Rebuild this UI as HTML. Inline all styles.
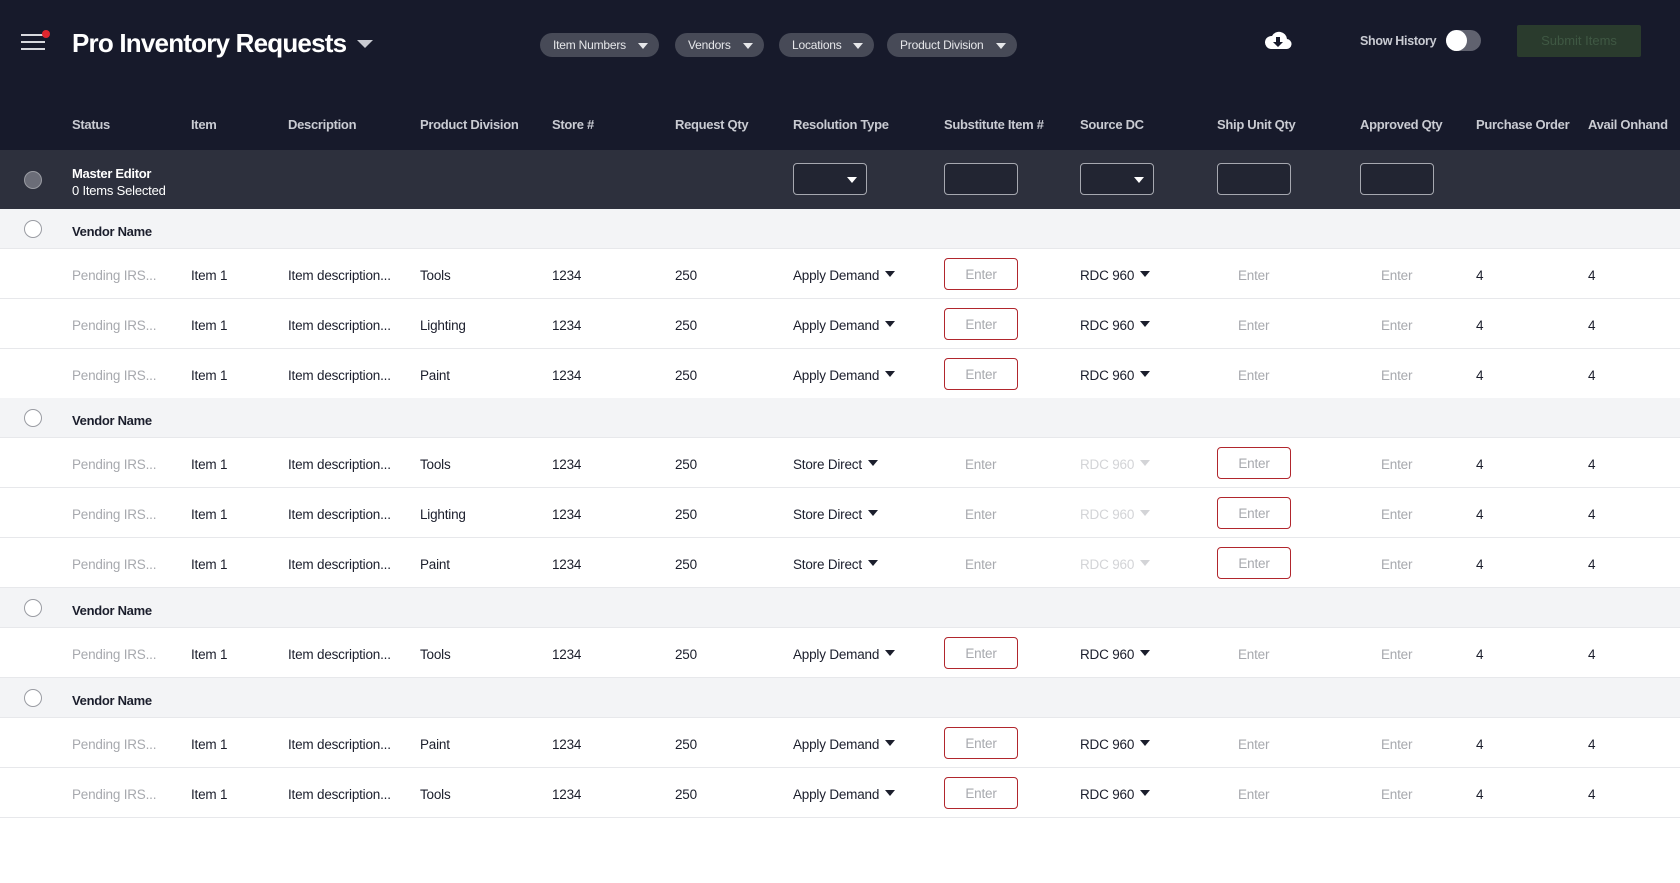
<!DOCTYPE html>
<html><head><meta charset="utf-8"><style>
*{box-sizing:border-box;margin:0;padding:0}
body{width:1680px;height:883px;background:#fff;font-family:"Liberation Sans",Arial,sans-serif;position:relative;overflow:hidden;color:#1b1e2c}
.hdr{position:absolute;left:0;top:0;width:1680px;height:150px;background:#171a2b}
.a{position:absolute;white-space:nowrap}
.pill{position:absolute;top:33px;height:24px;border-radius:12px;background:#474a57;color:#e6e7ea;font-size:12px;line-height:24px;padding-left:13px;letter-spacing:-0.2px}
.pill:after{content:"";position:absolute;right:11px;top:10px;border-left:5px solid transparent;border-right:5px solid transparent;border-top:6px solid #e6e7ea}
.ch{position:absolute;top:117px;color:#c9cbd2;font-size:13px;font-weight:bold;letter-spacing:-0.3px}
.me{position:absolute;left:0;top:150px;width:1680px;height:59px;background:#2d303d}
.box{position:absolute;top:13px;width:74px;height:32px;border:1px solid #a6a8b0;border-radius:4px;background:#222532}
.row{position:absolute;left:0;width:1680px;height:50px;border-bottom:1px solid #e7e8eb;font-size:13.5px;letter-spacing:-0.2px;background:#fff}
.row span{position:absolute;top:19px;white-space:nowrap}
.v{position:absolute;left:0;width:1680px;height:40px;background:#f3f4f6;border-bottom:1px solid #e7e8eb}
.v b{position:absolute;left:72px;top:15px;font-size:13px;color:#1b1e2c;letter-spacing:-0.3px}
.v i{position:absolute;left:24px;top:11px;width:18px;height:18px;border:1px solid #9a9ca3;border-radius:50%;background:#fff}
.g{color:#a7a9ae}
.lg{color:#d3d4d7}
.red{position:absolute;top:9px;left:944px;width:74px;height:32px;border:1px solid #b1262d;border-radius:4px;color:#a7a9ae;text-align:center;line-height:32px;font-size:13.5px}
.dd:after{content:"";display:inline-block;margin-left:6px;vertical-align:3px;border-left:5px solid transparent;border-right:5px solid transparent;border-top:6px solid #1b1e2c}
.ddl:after{content:"";display:inline-block;margin-left:6px;vertical-align:3px;border-left:5px solid transparent;border-right:5px solid transparent;border-top:6px solid #d3d4d7}
</style></head><body>
<div class="hdr">
 <div class="a" style="left:21px;top:34px;width:24px;height:2px;background:#d8d9de"></div>
 <div class="a" style="left:21px;top:41px;width:24px;height:2px;background:#d8d9de"></div>
 <div class="a" style="left:21px;top:48px;width:24px;height:2px;background:#d8d9de"></div>
 <div class="a" style="left:42px;top:30px;width:8px;height:8px;border-radius:50%;background:#e0262e"></div>
 <div class="a" style="left:72px;top:28px;font-size:26px;color:#fff;font-weight:bold;letter-spacing:-0.8px">Pro Inventory Requests</div>
 <div class="a" style="left:357px;top:40px;border-left:8px solid transparent;border-right:8px solid transparent;border-top:8px solid #c9cbd2"></div>
 <div class="pill" style="left:540px;width:119px">Item Numbers</div>
 <div class="pill" style="left:675px;width:89px">Vendors</div>
 <div class="pill" style="left:779px;width:95px">Locations</div>
 <div class="pill" style="left:887px;width:130px">Product Division</div>
 <svg class="a" style="left:1264px;top:29px" width="28" height="22" viewBox="0 0 28 22"><path d="M7 20h15a5 5 0 0 0 1-10A8 8 0 0 0 8 7a6.5 6.5 0 0 0-1 13z" fill="#fff"/><path d="M12 8h4v5h3l-5 5-5-5h3z" fill="#171a2b"/></svg>
 <div class="a" style="left:1360px;top:34px;font-size:12.5px;font-weight:bold;color:#c9cbd2;letter-spacing:-0.3px">Show History</div>
 <div class="a" style="left:1446px;top:30px;width:35px;height:21px;border-radius:11px;background:#60626f"></div>
 <div class="a" style="left:1446px;top:30px;width:21px;height:21px;border-radius:50%;background:#fff"></div>
 <div class="a" style="left:1517px;top:25px;width:124px;height:32px;background:#2a3b2d;border-radius:2px;color:#3f5843;font-size:13px;text-align:center;line-height:32px">Submit Items</div>
 <div class="ch" style="left:72px">Status</div>
 <div class="ch" style="left:191px">Item</div>
 <div class="ch" style="left:288px">Description</div>
 <div class="ch" style="left:420px">Product Division</div>
 <div class="ch" style="left:552px">Store #</div>
 <div class="ch" style="left:675px">Request Qty</div>
 <div class="ch" style="left:793px">Resolution Type</div>
 <div class="ch" style="left:944px">Substitute Item #</div>
 <div class="ch" style="left:1080px">Source DC</div>
 <div class="ch" style="left:1217px">Ship Unit Qty</div>
 <div class="ch" style="left:1360px">Approved Qty</div>
 <div class="ch" style="left:1476px">Purchase Order</div>
 <div class="ch" style="left:1588px">Avail Onhand</div>
</div>
<div class="me">
 <div class="a" style="left:24px;top:21px;width:18px;height:18px;border-radius:50%;background:#6b6d78;border:1px solid #9a9ca3"></div>
 <div class="a" style="left:72px;top:16px;font-size:13px;font-weight:bold;color:#fff;letter-spacing:-0.3px">Master Editor</div>
 <div class="a" style="left:72px;top:33px;font-size:13px;color:#fff;letter-spacing:-0.2px">0 Items Selected</div>
 <div class="box" style="left:793px"><div class="a" style="right:9px;top:13px;border-left:5px solid transparent;border-right:5px solid transparent;border-top:6px solid #fff"></div></div>
 <div class="box" style="left:944px"></div>
 <div class="box" style="left:1080px"><div class="a" style="right:9px;top:13px;border-left:5px solid transparent;border-right:5px solid transparent;border-top:6px solid #fff"></div></div>
 <div class="box" style="left:1217px"></div>
 <div class="box" style="left:1360px"></div>
</div>

<div class="v" style="top:209px"><i></i><b>Vendor Name</b></div>
<div class="row" style="top:249px"><span class="g" style="left:72px">Pending IRS...</span><span style="left:191px">Item 1</span><span style="left:288px">Item description...</span><span style="left:420px">Tools</span><span style="left:552px">1234</span><span style="left:675px">250</span><span class="dd" style="left:793px">Apply Demand</span><div class="red">Enter</div><span class="dd" style="left:1080px">RDC 960</span><span class="g" style="left:1238px">Enter</span><span class="g" style="left:1381px">Enter</span><span style="left:1476px">4</span><span style="left:1588px">4</span></div>
<div class="row" style="top:299px"><span class="g" style="left:72px">Pending IRS...</span><span style="left:191px">Item 1</span><span style="left:288px">Item description...</span><span style="left:420px">Lighting</span><span style="left:552px">1234</span><span style="left:675px">250</span><span class="dd" style="left:793px">Apply Demand</span><div class="red">Enter</div><span class="dd" style="left:1080px">RDC 960</span><span class="g" style="left:1238px">Enter</span><span class="g" style="left:1381px">Enter</span><span style="left:1476px">4</span><span style="left:1588px">4</span></div>
<div class="row" style="top:349px"><span class="g" style="left:72px">Pending IRS...</span><span style="left:191px">Item 1</span><span style="left:288px">Item description...</span><span style="left:420px">Paint</span><span style="left:552px">1234</span><span style="left:675px">250</span><span class="dd" style="left:793px">Apply Demand</span><div class="red">Enter</div><span class="dd" style="left:1080px">RDC 960</span><span class="g" style="left:1238px">Enter</span><span class="g" style="left:1381px">Enter</span><span style="left:1476px">4</span><span style="left:1588px">4</span></div>

<div class="v" style="top:398px"><i></i><b>Vendor Name</b></div>
<div class="row" style="top:438px"><span class="g" style="left:72px">Pending IRS...</span><span style="left:191px">Item 1</span><span style="left:288px">Item description...</span><span style="left:420px">Tools</span><span style="left:552px">1234</span><span style="left:675px">250</span><span class="dd" style="left:793px">Store Direct</span><span class="g" style="left:965px">Enter</span><span class="ddl lg" style="left:1080px">RDC 960</span><div class="red" style="left:1217px">Enter</div><span class="g" style="left:1381px">Enter</span><span style="left:1476px">4</span><span style="left:1588px">4</span></div>
<div class="row" style="top:488px"><span class="g" style="left:72px">Pending IRS...</span><span style="left:191px">Item 1</span><span style="left:288px">Item description...</span><span style="left:420px">Lighting</span><span style="left:552px">1234</span><span style="left:675px">250</span><span class="dd" style="left:793px">Store Direct</span><span class="g" style="left:965px">Enter</span><span class="ddl lg" style="left:1080px">RDC 960</span><div class="red" style="left:1217px">Enter</div><span class="g" style="left:1381px">Enter</span><span style="left:1476px">4</span><span style="left:1588px">4</span></div>
<div class="row" style="top:538px"><span class="g" style="left:72px">Pending IRS...</span><span style="left:191px">Item 1</span><span style="left:288px">Item description...</span><span style="left:420px">Paint</span><span style="left:552px">1234</span><span style="left:675px">250</span><span class="dd" style="left:793px">Store Direct</span><span class="g" style="left:965px">Enter</span><span class="ddl lg" style="left:1080px">RDC 960</span><div class="red" style="left:1217px">Enter</div><span class="g" style="left:1381px">Enter</span><span style="left:1476px">4</span><span style="left:1588px">4</span></div>

<div class="v" style="top:588px"><i></i><b>Vendor Name</b></div>
<div class="row" style="top:628px"><span class="g" style="left:72px">Pending IRS...</span><span style="left:191px">Item 1</span><span style="left:288px">Item description...</span><span style="left:420px">Tools</span><span style="left:552px">1234</span><span style="left:675px">250</span><span class="dd" style="left:793px">Apply Demand</span><div class="red">Enter</div><span class="dd" style="left:1080px">RDC 960</span><span class="g" style="left:1238px">Enter</span><span class="g" style="left:1381px">Enter</span><span style="left:1476px">4</span><span style="left:1588px">4</span></div>

<div class="v" style="top:678px"><i></i><b>Vendor Name</b></div>
<div class="row" style="top:718px"><span class="g" style="left:72px">Pending IRS...</span><span style="left:191px">Item 1</span><span style="left:288px">Item description...</span><span style="left:420px">Paint</span><span style="left:552px">1234</span><span style="left:675px">250</span><span class="dd" style="left:793px">Apply Demand</span><div class="red">Enter</div><span class="dd" style="left:1080px">RDC 960</span><span class="g" style="left:1238px">Enter</span><span class="g" style="left:1381px">Enter</span><span style="left:1476px">4</span><span style="left:1588px">4</span></div>
<div class="row" style="top:768px"><span class="g" style="left:72px">Pending IRS...</span><span style="left:191px">Item 1</span><span style="left:288px">Item description...</span><span style="left:420px">Tools</span><span style="left:552px">1234</span><span style="left:675px">250</span><span class="dd" style="left:793px">Apply Demand</span><div class="red">Enter</div><span class="dd" style="left:1080px">RDC 960</span><span class="g" style="left:1238px">Enter</span><span class="g" style="left:1381px">Enter</span><span style="left:1476px">4</span><span style="left:1588px">4</span></div>
</body></html>
